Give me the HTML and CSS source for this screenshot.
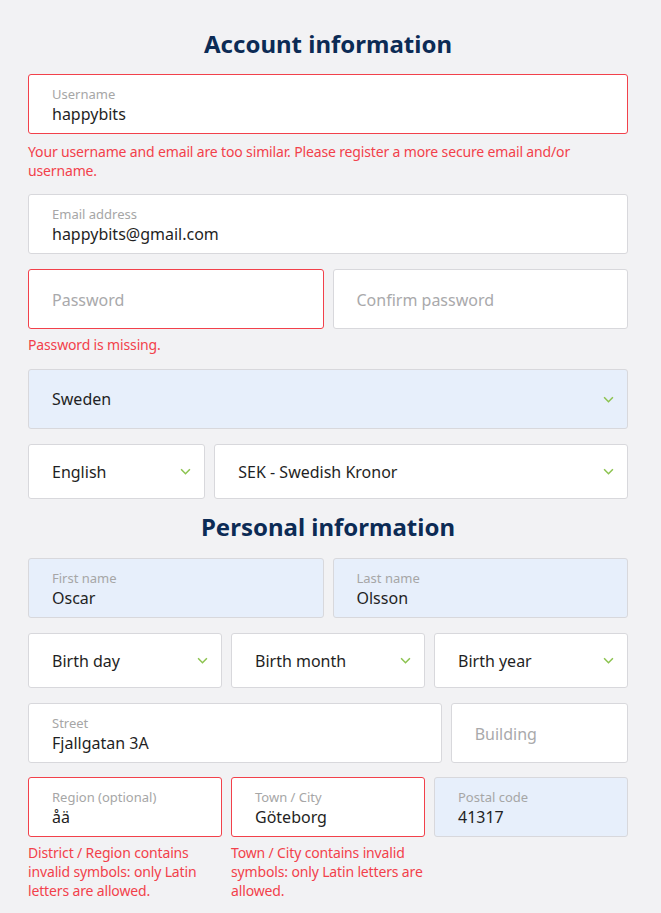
FILE: index.html
```html
<!DOCTYPE html>
<html lang="en">
<head>
<meta charset="utf-8">
<title>Registration</title>
<link rel="stylesheet" href="styles.css">
</head>
<body>
<main class="form">
  <h2 class="title title-first">Account information</h2>

  <div class="field error">
    <span class="label">Username</span>
    <span class="value">happybits</span>
  </div>
  <p class="err">Your username and email are too similar. Please register a more secure email and/or username.</p>

  <div class="field">
    <span class="label">Email address</span>
    <span class="value">happybits@gmail.com</span>
  </div>

  <div class="row cols-2">
    <div class="field error empty"><span class="placeholder">Password</span></div>
    <div class="field empty"><span class="placeholder">Confirm password</span></div>
  </div>
  <p class="err err-tight">Password is missing.</p>

  <div class="row">
    <div class="select filled"><span class="value">Sweden</span><svg class="chev" viewBox="0 0 10 6"><path d="M1 1l4 4 4-4"/></svg></div>
  </div>

  <div class="row cols-37">
    <div class="select short"><span class="value">English</span><svg class="chev" viewBox="0 0 10 6"><path d="M1 1l4 4 4-4"/></svg></div>
    <div class="select short"><span class="value">SEK - Swedish Kronor</span><svg class="chev" viewBox="0 0 10 6"><path d="M1 1l4 4 4-4"/></svg></div>
  </div>

  <h2 class="title title-second">Personal information</h2>

  <div class="row cols-2">
    <div class="field filled"><span class="label">First name</span><span class="value">Oscar</span></div>
    <div class="field filled"><span class="label">Last name</span><span class="value">Olsson</span></div>
  </div>

  <div class="row cols-3">
    <div class="select short"><span class="value">Birth day</span><svg class="chev" viewBox="0 0 10 6"><path d="M1 1l4 4 4-4"/></svg></div>
    <div class="select short"><span class="value">Birth month</span><svg class="chev" viewBox="0 0 10 6"><path d="M1 1l4 4 4-4"/></svg></div>
    <div class="select short"><span class="value">Birth year</span><svg class="chev" viewBox="0 0 10 6"><path d="M1 1l4 4 4-4"/></svg></div>
  </div>

  <div class="row cols-73">
    <div class="field"><span class="label">Street</span><span class="value">Fjallgatan 3A</span></div>
    <div class="field empty"><span class="placeholder">Building</span></div>
  </div>

  <div class="row cols-3 top last">
    <div class="cell">
      <div class="field error"><span class="label">Region (optional)</span><span class="value">åä</span></div>
      <p class="err">District / Region contains invalid symbols: only Latin letters are allowed.</p>
    </div>
    <div class="cell">
      <div class="field error"><span class="label">Town / City</span><span class="value">Göteborg</span></div>
      <p class="err">Town / City contains invalid symbols: only Latin letters are allowed.</p>
    </div>
    <div class="cell">
      <div class="field filled"><span class="label">Postal code</span><span class="value">41317</span></div>
    </div>
  </div>
</main>
</body>
</html>
```

FILE: styles.css
```css
* { box-sizing: border-box; }

html, body {
  margin: 0;
  padding: 0;
  background: #f2f2f4;
}

body {
  font-family: "Noto Sans", "Open Sans", sans-serif;
  font-stretch: 87.5%;
  color: #222;
}

.form {
  width: 600px;
  margin-left: 28px;
  padding-top: 29px;
}

.title {
  margin: 0;
  font-size: 24px;
  line-height: 30px;
  font-weight: 700;
  color: #0c2b55;
  text-align: center;
}

.title-first { margin-bottom: 15px; }
.title-second { margin-top: 13px; margin-bottom: 16px; }

.form > .row,
.form > .field { margin-top: 15px; }

.form > .title + .row,
.form > .title + .field,
.form > .err + .row,
.form > .err + .field { margin-top: 0; }

.form > .row.last { margin-top: 14px; }

.row {
  display: grid;
  gap: 9px;
}
.row.top { align-items: start; }

.cols-2 { grid-template-columns: 1fr 1fr; }
.cols-3 { grid-template-columns: 1fr 1fr 1fr; }
.cols-37 { grid-template-columns: 3fr 7fr; }
.cols-73 { grid-template-columns: 7fr 3fr; }

.field, .select {
  background: #fff;
  border: 1px solid #d8d8dc;
  border-radius: 3px;
  display: flex;
  flex-direction: column;
  justify-content: center;
  padding: 0 0 0 23px;
}

.field { height: 60px; padding-top: 1px; }

.field.filled, .select.filled { background: #e7effb; }
.field.error { border-color: #f2414b; }

.label {
  font-size: 13px;
  line-height: 18px;
  color: #a6a6a6;
}

.value {
  font-size: 16px;
  line-height: 22px;
  color: #1f1f24;
}

.placeholder {
  font-size: 16px;
  line-height: 22px;
  color: #a9a9ab;
}

.select {
  height: 60px;
  flex-direction: row;
  align-items: center;
  justify-content: space-between;
  padding-right: 13px;
}
.select.short { height: 55px; }

.chev {
  width: 11px;
  height: 7px;
  flex: none;
  fill: none;
  stroke: #8cc34f;
  stroke-width: 1.4;
}

.err {
  margin: 8px 0 14px;
  font-size: 14px;
  line-height: 19px;
  letter-spacing: -0.15px;
  color: #f2414b;
}

.err.err-tight { margin: 6px 0 15px; }

.cell .err { margin: 6px 0 0; }
```
